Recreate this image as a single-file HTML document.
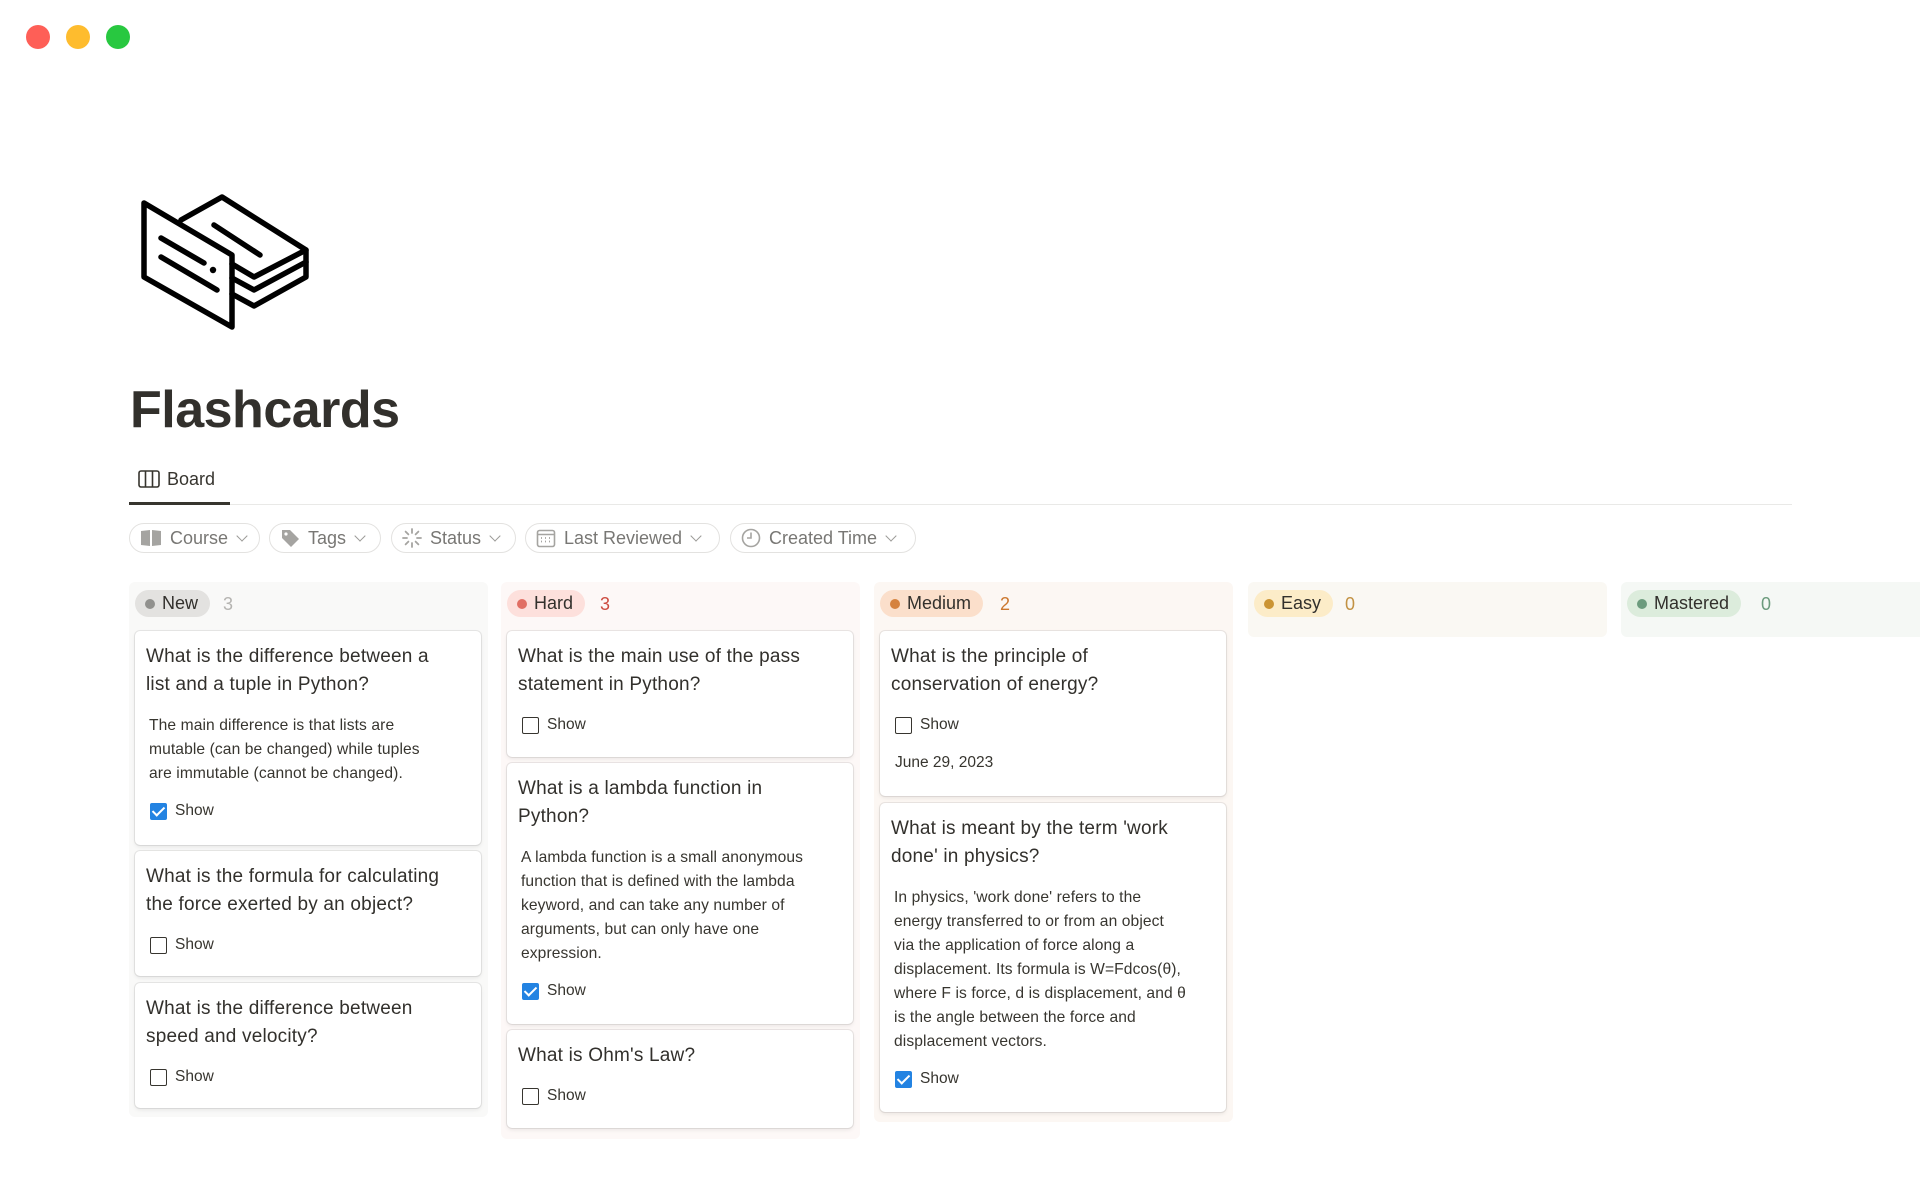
<!DOCTYPE html>
<html><head><meta charset="utf-8"><style>
*{box-sizing:border-box;margin:0;padding:0}
body{width:1920px;height:1200px;background:#fff;font-family:"Liberation Sans",Helvetica,Arial,sans-serif;color:#37352f;position:relative;overflow:hidden}
.tl{position:absolute;top:25px;width:24px;height:24px;border-radius:50%}
.abs{position:absolute}
.pill{position:absolute;top:523px;height:30px;border:1px solid #e3e2e0;border-radius:15px;color:#787774;font-size:18px;display:flex;align-items:center;padding-left:10px;gap:8px}
.pill .chev{width:8px;height:8px;border-right:1.5px solid #9b9a97;border-bottom:1.5px solid #9b9a97;transform:rotate(45deg);margin:-4px 0 0 2px}
.col{position:absolute;top:582px;width:359px;border-radius:6px}
.hdr{position:absolute;left:6px;top:8px;height:27px;border-radius:14px;display:flex;align-items:center;padding:0 12px 0 10px;font-size:18px;color:#32302c}
.hdr .dot{width:10px;height:10px;border-radius:50%;margin-right:7px}
.cnt{position:absolute;top:12px;font-size:18px}
.card{position:absolute;left:6px;width:346px;background:#fff;border-radius:5px;box-shadow:0 0 0 1px rgba(15,15,15,.08),0 2px 4px rgba(15,15,15,.08);padding:12px 12px 12px 11px;white-space:nowrap;overflow:hidden}
.q{font-size:19px;line-height:28px;color:#32302c;letter-spacing:0.2px}
.a{font-size:15.6px;line-height:24px;color:#37352f;padding:15px 0 0 3px;letter-spacing:0.1px}
.sh{display:flex;align-items:center;font-size:15.5px;margin-top:17px;padding-left:4px;gap:8px}
.cb{width:17px;height:17px;border:1.6px solid #37352f;border-radius:2px;display:inline-block}
.cb.on{background:#2383e2;border-color:#2383e2;position:relative}
.cb.on:after{content:"";position:absolute;left:4px;top:0px;width:5px;height:10px;border-right:2px solid #fff;border-bottom:2px solid #fff;transform:rotate(45deg)}
</style></head><body>
<div class="tl" style="left:26px;background:#fe5f57"></div>
<div class="tl" style="left:66px;background:#febc2e"></div>
<div class="tl" style="left:106px;background:#28c840"></div>

<svg class="abs" style="left:0;top:0" width="330" height="340" viewBox="0 0 330 340" fill="none" stroke="#000" stroke-width="5.5" stroke-linejoin="round" stroke-linecap="round">
<path d="M144 203 L232 255 L232 327 L144 277 Z"/>
<path d="M161 238 L204 263 M161 257 L217 290"/>
<circle cx="213" cy="270" r="3.2" fill="#000" stroke="none"/>
<path d="M181 220 L222 197 L306 250 L254 277 L232 264"/>
<path d="M214 225 L260 255"/>
<path d="M306 250 L306 262 L254 290 L232 278"/>
<path d="M306 262 L306 277 L254 306 L232 294"/>
</svg>

<div class="abs" style="left:130px;top:380px;font-size:52px;font-weight:bold;color:#32302c;letter-spacing:-0.5px">Flashcards</div>

<svg class="abs" style="left:138px;top:470px" width="22" height="18" viewBox="0 0 22 18" fill="none" stroke="#37352f" stroke-width="1.6"><rect x="1" y="1" width="20" height="16" rx="2"/><path d="M7.5 1v16M14.5 1v16"/></svg>
<div class="abs" style="left:167px;top:469px;font-size:18px;color:#37352f">Board</div>
<div class="abs" style="left:129px;top:504px;width:1663px;height:1px;background:#e9e9e7"></div>
<div class="abs" style="left:129px;top:502px;width:101px;height:3px;background:#37352f"></div>

<div class="pill" style="left:129px;width:131px"><svg width="22" height="18" viewBox="0 0 22 18"><path d="M1 2 L10 1 L10 17 L1 16Z M12 1 L21 2 L21 16 L12 17Z" fill="#a5a4a1"/></svg>Course<span class="chev"></span></div>
<div class="pill" style="left:269px;width:112px"><svg width="20" height="20" viewBox="0 0 20 20"><path d="M2 2 L10 2 L19 11 L11 19 L2 10Z" fill="#a5a4a1"/><circle cx="6" cy="6" r="1.6" fill="#fff"/></svg>Tags<span class="chev"></span></div>
<div class="pill" style="left:391px;width:125px"><svg width="20" height="20" viewBox="0 0 20 20" stroke="#a5a4a1" stroke-width="1.8" stroke-linecap="round"><path d="M10 1v4M10 15v4M1 10h4M15 10h4M3.6 3.6l2.8 2.8M13.6 13.6l2.8 2.8M3.6 16.4l2.8-2.8M13.6 6.4l2.8-2.8"/></svg>Status<span class="chev"></span></div>
<div class="pill" style="left:525px;width:195px"><svg width="20" height="19" viewBox="0 0 20 19" fill="none" stroke="#a5a4a1" stroke-width="1.6"><rect x="1.5" y="1.5" width="17" height="16" rx="2"/><path d="M1.5 5.5h17" /><path d="M5 9h1M9 9h1M13 9h1M5 12.5h1M9 12.5h1M13 12.5h1" stroke-width="1.8"/></svg>Last Reviewed<span class="chev"></span></div>
<div class="pill" style="left:730px;width:186px"><svg width="20" height="20" viewBox="0 0 20 20" fill="none" stroke="#a5a4a1" stroke-width="1.6"><circle cx="10" cy="10" r="8.5"/><path d="M10 4.5V10H6"/></svg>Created Time<span class="chev"></span></div>

<!-- New -->
<div class="col" style="left:129px;height:535px;background:#f9f9f8">
 <div class="hdr" style="background:#e3e2e0"><span class="dot" style="background:#91918e"></span>New</div>
 <div class="cnt" style="left:94px;color:#b5b4b1">3</div>
 <div class="card" style="top:49px;height:214px"><div class="q">What is the difference between a<br>list and a tuple in Python?</div><div class="a">The main difference is that lists are<br>mutable (can be changed) while tuples<br>are immutable (cannot be changed).</div><div class="sh" style="margin-top:16px"><span class="cb on"></span>Show</div></div>
 <div class="card" style="top:269px;height:125px"><div class="q">What is the formula for calculating<br>the force exerted by an object?</div><div class="sh"><span class="cb"></span>Show</div></div>
 <div class="card" style="top:401px;height:125px"><div class="q">What is the difference between<br>speed and velocity?</div><div class="sh"><span class="cb"></span>Show</div></div>
</div>

<!-- Hard -->
<div class="col" style="left:501px;height:557px;background:#fdf8f7">
 <div class="hdr" style="background:#fde0dc"><span class="dot" style="background:#e16f64"></span>Hard</div>
 <div class="cnt" style="left:99px;color:#cd4c41">3</div>
 <div class="card" style="top:49px;height:126px"><div class="q">What is the main use of the pass<br>statement in Python?</div><div class="sh"><span class="cb"></span>Show</div></div>
 <div class="card" style="top:181px;height:261px"><div class="q">What is a lambda function in<br>Python?</div><div class="a">A lambda function is a small anonymous<br>function that is defined with the lambda<br>keyword, and can take any number of<br>arguments, but can only have one<br>expression.</div><div class="sh" style="margin-top:16px"><span class="cb on"></span>Show</div></div>
 <div class="card" style="top:448px;height:98px"><div class="q">What is Ohm's Law?</div><div class="sh"><span class="cb"></span>Show</div></div>
</div>

<!-- Medium -->
<div class="col" style="left:874px;height:540px;background:#fcf7f3">
 <div class="hdr" style="background:#fbdfcb"><span class="dot" style="background:#d5823f"></span>Medium</div>
 <div class="cnt" style="left:126px;color:#cc782f">2</div>
 <div class="card" style="top:49px;height:165px"><div class="q">What is the principle of<br>conservation of energy?</div><div class="sh"><span class="cb"></span>Show</div><div style="font-size:15.5px;margin-top:20px;padding-left:4px">June 29, 2023</div></div>
 <div class="card" style="top:221px;height:309px"><div class="q">What is meant by the term 'work<br>done' in physics?</div><div class="a">In physics, 'work done' refers to the<br>energy transferred to or from an object<br>via the application of force along a<br>displacement. Its formula is W=Fdcos(θ),<br>where F is force, d is displacement, and θ<br>is the angle between the force and<br>displacement vectors.</div><div class="sh" style="margin-top:16px"><span class="cb on"></span>Show</div></div>
</div>

<!-- Easy -->
<div class="col" style="left:1248px;height:55px;background:#faf8f3">
 <div class="hdr" style="background:#fcecc8"><span class="dot" style="background:#cb9433"></span>Easy</div>
 <div class="cnt" style="left:97px;color:#c29243">0</div>
</div>

<!-- Mastered -->
<div class="col" style="left:1621px;width:320px;height:55px;background:#f5f8f5">
 <div class="hdr" style="background:#dcecdc"><span class="dot" style="background:#6c9b7d"></span>Mastered</div>
 <div class="cnt" style="left:140px;color:#6c9b7d">0</div>
</div>
</body></html>
